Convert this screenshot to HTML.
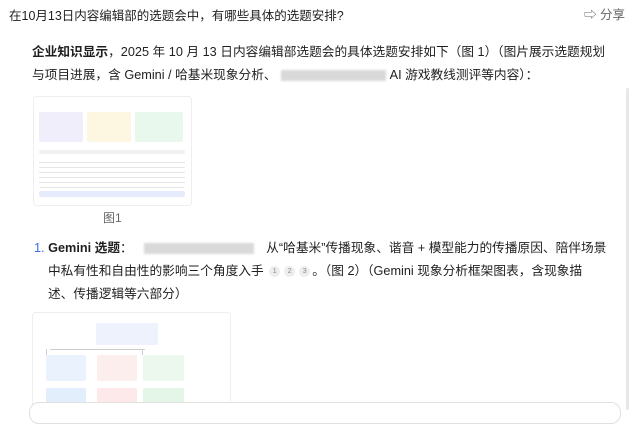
<!DOCTYPE html>
<html><head><meta charset="utf-8"><style>
body{margin:0;width:640px;height:410px;overflow:hidden;background:#fff;font-family:"Liberation Sans","Noto Sans CJK SC",sans-serif;color:#1f1f1f;position:relative}
.a{position:absolute;white-space:nowrap;line-height:16px}
.t{font-size:12.7px}
.blur{display:inline-block;background:#d9d9d9;height:11px;vertical-align:middle;filter:blur(1px)}
.c{display:inline-block;width:11px;height:11px;border-radius:50%;background:#eee;font-size:7px;color:#888;text-align:center;line-height:11px;vertical-align:middle;margin:0 2px}
.box{position:absolute;border-radius:2px}
</style></head><body>
<div class="a" style="left:9px;top:8px;font-size:12.5px">在10月13日内容编辑部的选题会中，有哪些具体的选题安排?</div>
<div class="a" style="left:584px;top:7px;font-size:12.5px;color:#666">⇨ 分享</div>

<div class="a t" style="left:32px;top:44px"><b>企业知识显示</b>，2025 年 10 月 13 日内容编辑部选题会的具体选题安排如下（图 1）（图片展示选题规划</div>
<div class="a t" style="left:32px;top:67px">与项目进展，含 Gemini / 哈基米现象分析、<span class="blur" style="width:105px;margin:0 4px"></span>AI 游戏教线测评等内容）：</div>

<div class="box" style="left:33px;top:96px;width:157px;height:108px;border:1px solid #eee;border-radius:4px;background:#fff"></div>
<div class="box" style="left:39px;top:112px;width:44px;height:30px;background:#f1eefc"></div>
<div class="box" style="left:87px;top:112px;width:44px;height:30px;background:#fdf6e0"></div>
<div class="box" style="left:135px;top:112px;width:48px;height:30px;background:#e9f8ec"></div>
<div class="box" style="left:39px;top:150px;width:146px;height:4px;background:#f1f1f1"></div>
<div class="box" style="left:39px;top:158px;width:146px;height:30px;background:repeating-linear-gradient(#fff 0 4px,#e6e6e6 4px 5px)"></div>
<div class="box" style="left:39px;top:191px;width:146px;height:6px;background:#e6eafd"></div>
<div class="a" style="left:103px;top:210px;font-size:12px;color:#666">图1</div>

<div class="a t" style="left:34px;top:240px"><span style="color:#3a6cf0">1.</span> <b>Gemini 选题</b>： <span class="blur" style="width:110px;margin:0 12px 0 8px"></span>从“哈基米”传播现象、谐音 + 模型能力的传播原因、陪伴场景</div>
<div class="a t" style="left:48px;top:263px">中私有性和自由性的影响三个角度入手 <span class="c">1</span><span class="c">2</span><span class="c">3</span>。（图 2）（Gemini 现象分析框架图表，含现象描</div>
<div class="a t" style="left:48px;top:286px">述、传播逻辑等六部分）</div>

<div class="box" style="left:32px;top:312px;width:197px;height:100px;border:1px solid #eee;border-radius:4px"></div>
<div class="box" style="left:96px;top:323px;width:62px;height:22px;background:#eef2fc"></div>
<div class="box" style="left:50px;top:349px;width:95px;height:1px;background:#ccc"></div>
<div class="box" style="left:46px;top:349px;width:1px;height:6px;background:#ccc"></div>
<div class="box" style="left:142px;top:349px;width:1px;height:6px;background:#ccc"></div>
<div class="box" style="left:46px;top:355px;width:40px;height:26px;background:#eaf2fd"></div>
<div class="box" style="left:97px;top:355px;width:40px;height:26px;background:#fdeeee"></div>
<div class="box" style="left:143px;top:355px;width:41px;height:26px;background:#ecf8ee"></div>
<div class="box" style="left:46px;top:388px;width:40px;height:20px;background:#e3eefc"></div>
<div class="box" style="left:97px;top:388px;width:40px;height:20px;background:#fde9ea"></div>
<div class="box" style="left:143px;top:388px;width:41px;height:20px;background:#e4f6e7"></div>

<div class="box" style="left:29px;top:402px;width:590px;height:20px;border:1px solid #e0e0e0;border-radius:10px;background:#fff"></div>
<div class="box" style="left:626px;top:88px;width:3px;height:322px;background:#e8e8e8"></div>
</body></html>
